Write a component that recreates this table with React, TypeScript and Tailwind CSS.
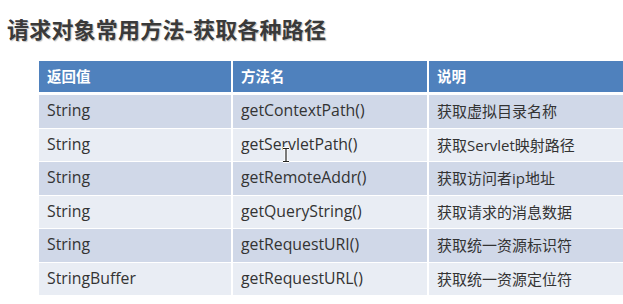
import React from "react";

const rows = [
  ["String", "getContextPath()", "获取虚拟目录名称"],
  ["String", "getServletPath()", "获取Servlet映射路径"],
  ["String", "getRemoteAddr()", "获取访问者ip地址"],
  ["String", "getQueryString()", "获取请求的消息数据"],
  ["String", "getRequestURI()", "获取统一资源标识符"],
  ["StringBuffer", "getRequestURL()", "获取统一资源定位符"],
];

const font = { fontFamily: '"Open Sans", "Noto Sans CJK SC", sans-serif' };

export default function App() {
  return (
    <div className="relative w-[623px] h-[304px] overflow-hidden bg-white" style={font}>
      <div className="pl-[7px] pt-[14px] h-[61px]">
        <h1
          className="text-[22px] leading-[28px] font-bold text-[#3a3a3a] tracking-[0.2px] [text-shadow:1px_1px_1px_rgba(0,0,0,0.25)]"
          style={{ fontFamily: '"Noto Sans CJK SC", sans-serif' }}
        >
          请求对象常用方法-获取各种路径
        </h1>
      </div>
      <div className="ml-[39px] w-[600px] flex flex-col">
        <div className="flex h-[31px] bg-[#4f81bd] text-white text-[14.5px] font-bold items-center border-b-[3px] border-white box-content">
          <div className="w-[194px] pl-[8px] border-r-2 border-white h-full flex items-center">返回值</div>
          <div className="w-[196px] pl-[8px] border-r-2 border-white h-full flex items-center">方法名</div>
          <div className="flex-1 pl-[8px] h-full flex items-center">说明</div>
        </div>
        {rows.map((r, i) => (
          <div
            key={i}
            className={`flex h-[33.5px] border-b border-white text-[15px] text-[#333333] ${
              i % 2 === 0 ? "bg-[#d0d8e8]" : "bg-[#e9edf4]"
            }`}
          >
            <div className="w-[194px] pl-[8px] border-r-2 border-white flex items-center text-[15.8px]">{r[0]}</div>
            <div className="w-[196px] pl-[8px] border-r-2 border-white flex items-center text-[15.8px]">{r[1]}</div>
            <div className="flex-1 pl-[8px] flex items-center">{r[2]}</div>
          </div>
        ))}
      </div>
      <svg className="absolute left-[282px] top-[147px]" width="8" height="16" viewBox="0 0 8 16">
        <path d="M1 1.5h6M4 1.5v13M1 14.5h6" stroke="#ffffff" strokeWidth="3" fill="none" />
        <path d="M1 1.5h6M4 1.5v13M1 14.5h6" stroke="#222" strokeWidth="1.2" fill="none" />
      </svg>
    </div>
  );
}
